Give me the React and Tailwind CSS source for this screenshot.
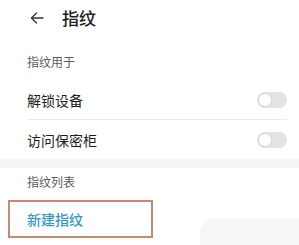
export default function App() {
    const rows = ["解锁设备", "访问保密柜"];

    return (
        <div className="relative w-[299px] h-[245px] overflow-hidden bg-white font-['Noto_Sans_CJK_SC',sans-serif]">
            {/* Header */}
            <div className="flex items-center h-[36px] pl-[30px] gap-[18px]">
                <svg width="14" height="12" viewBox="0 0 14 12" fill="none" stroke="#333" strokeWidth="1.3" strokeLinecap="round" strokeLinejoin="round">
                    <path d="M13 6H1.5" />
                    <path d="M6.5 1L1.5 6l5 5" />
                </svg>
                <span className="text-[17px] leading-[20px] font-medium text-[#222]">指纹</span>
            </div>

            {/* Section: 指纹用于 */}
            <div className="mt-[18px] pl-[27px] text-[12px] leading-[16px] text-[#5c5c5c]">指纹用于</div>

            <div className="mt-[10px] pl-[27px] pr-[12px]">
                {rows.map((label, i) => (
                    <div key={label}>
                        <div className="flex items-center justify-between h-[39px]">
                            <span className="text-[14px] leading-[18px] text-[#1c1c1c]">{label}</span>
                            <div className="relative w-[30px] h-[16px] rounded-full bg-[#e3e3e3]">
                                <div className="absolute left-[1px] top-[1px] w-[14px] h-[14px] rounded-full bg-white border border-[#d6d6d6]" />
                            </div>
                        </div>
                        {i === 0 && <div className="h-px bg-[#ededed]" />}
                    </div>
                ))}
            </div>

            <div className="h-[9px] bg-[#f5f5f5]" />

            {/* Section: 指纹列表 */}
            <div className="pt-[6px] pl-[27px] text-[12px] leading-[16px] text-[#5c5c5c]">指纹列表</div>

            <div className="mt-[10px] ml-[8px] w-[145px] h-[38px] flex items-center pl-[17px] border-2 border-[#c58b70]">
                <span className="text-[14px] leading-[18px] font-medium text-[#3399c9]">新建指纹</span>
            </div>

            {/* faint toast at bottom right */}
            <div className="absolute left-[200px] top-[219px] w-[110px] h-[40px] rounded-l-[14px] bg-[#f6f6f6]" />
        </div>
    );
}
